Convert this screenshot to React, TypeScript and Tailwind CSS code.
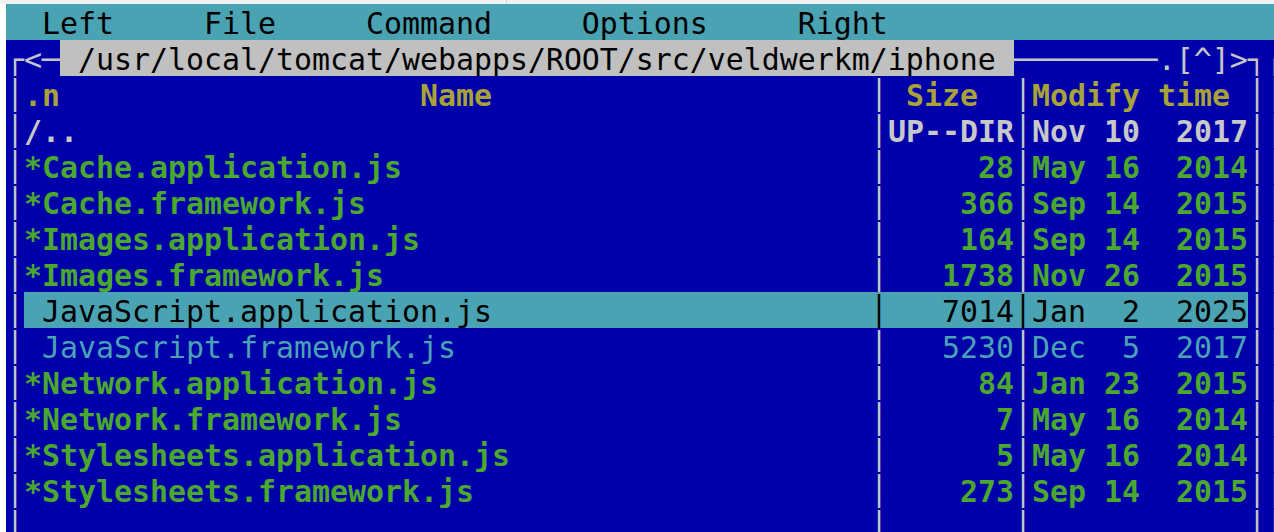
import React from "react";

type Kind = "exe" | "sel" | "plain" | "dir" | "head";

const files: { n: string; s: string; d: string; k: Kind }[] = [
  { n: "/..", s: "UP--DIR", d: "Nov 10  2017", k: "dir" },
  { n: "*Cache.application.js", s: "28", d: "May 16  2014", k: "exe" },
  { n: "*Cache.framework.js", s: "366", d: "Sep 14  2015", k: "exe" },
  { n: "*Images.application.js", s: "164", d: "Sep 14  2015", k: "exe" },
  { n: "*Images.framework.js", s: "1738", d: "Nov 26  2015", k: "exe" },
  { n: " JavaScript.application.js", s: "7014", d: "Jan  2  2025", k: "sel" },
  { n: " JavaScript.framework.js", s: "5230", d: "Dec  5  2017", k: "plain" },
  { n: "*Network.application.js", s: "84", d: "Jan 23  2015", k: "exe" },
  { n: "*Network.framework.js", s: "7", d: "May 16  2014", k: "exe" },
  { n: "*Stylesheets.application.js", s: "5", d: "May 16  2014", k: "exe" },
  { n: "*Stylesheets.framework.js", s: "273", d: "Sep 14  2015", k: "exe" },
];

const cell = "h-[36px] pt-[4px] leading-[32px] whitespace-pre shrink-0 overflow-hidden";

const textClass: Record<Kind, string> = {
  exe: "text-[#4ba82e] font-bold",
  sel: "text-black",
  plain: "text-[#4aa3b3]",
  dir: "text-[#c8c8c8] font-bold",
  head: "text-[#a9a237] font-bold",
};

function Bar({ dark }: { dark?: boolean }) {
  return (
    <span className={`${cell} w-[18px] ${dark ? "text-black" : "text-[#c6c6c6]"}`}>│</span>
  );
}

function Row({ n, s, d, k }: { n: string; s: string; d: string; k: Kind }) {
  const sel = k === "sel";
  const t = textClass[k];
  return (
    <div className="flex h-[36px]">
      <Bar />
      <div className={`flex ${sel ? "bg-[#4aa3b3]" : ""}`}>
        <span className={`${cell} w-[846px] ${t}`}>{n}</span>
        <Bar dark={sel} />
        <span className={`${cell} w-[126px] text-right ${t}`}>{s}</span>
        <Bar dark={sel} />
        <span className={`${cell} w-[216px] ${t}`}>{d}</span>
      </div>
      <Bar />
      <Bar />
    </div>
  );
}

export default function App() {
  return (
    <div
      className="w-[1274px] h-[532px] overflow-hidden bg-white flex flex-col"
      style={{ fontFamily: '"DejaVu Sans Mono", monospace' }}
    >
      <div className="h-[4px] shrink-0 flex bg-[#f2f2f2]">
        <div className="w-[507px] border-r border-[#d4d4d4]" />
      </div>
      <div className="ml-[6px] flex-1 bg-[#0000ab] text-[29.9px] overflow-hidden">
        <div className="flex h-[36px] bg-[#4aa3b3] text-black">
          <span className={cell}>{"  Left     File     Command     Options     Right"}</span>
        </div>
        <div className="flex h-[36px] text-[#c6c6c6]">
          <span className={cell}>{"┌<─"}</span>
          <span className={`${cell} bg-[#c0c0c0] text-black`}>
            {" /usr/local/tomcat/webapps/ROOT/src/veldwerkm/iphone "}
          </span>
          <span className={cell}>{"────────.[^]>┐┌"}</span>
        </div>
        <div className="flex h-[36px]">
          <Bar />
          <span className={`${cell} w-[846px] ${textClass.head}`}>{".n                    Name"}</span>
          <Bar />
          <span className={`${cell} w-[126px] ${textClass.head}`}>{" Size  "}</span>
          <Bar />
          <span className={`${cell} w-[216px] ${textClass.head}`}>{"Modify time "}</span>
          <Bar />
          <Bar />
        </div>
        {files.map((f) => (
          <Row key={f.n} {...f} />
        ))}
        <div className="flex h-[36px]">
          <Bar />
          <span className={`${cell} w-[846px]`} />
          <Bar />
          <span className={`${cell} w-[126px]`} />
          <Bar />
          <span className={`${cell} w-[216px]`} />
          <Bar />
          <Bar />
        </div>
      </div>
    </div>
  );
}
